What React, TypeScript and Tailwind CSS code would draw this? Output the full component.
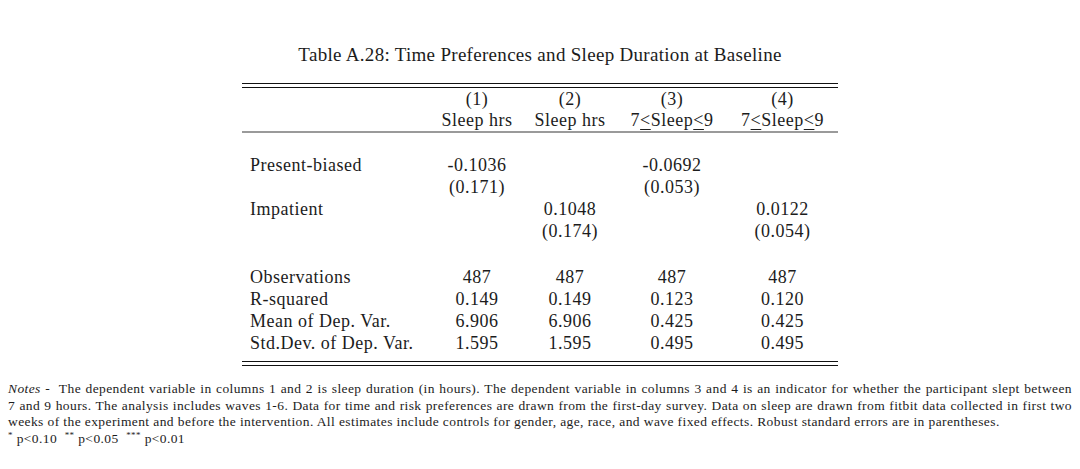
const cols = 'grid grid-cols-[189px_92px_94px_110px_111px]';

const coefRows: [string, string[]][] = [
  ['Present-biased', ['-0.1036', '', '-0.0692', '']],
  ['', ['(0.171)', '', '(0.053)', '']],
  ['Impatient', ['', '0.1048', '', '0.0122']],
  ['', ['', '(0.174)', '', '(0.054)']],
];

const statRows: [string, string[]][] = [
  ['Observations', ['487', '487', '487', '487']],
  ['R-squared', ['0.149', '0.149', '0.123', '0.120']],
  ['Mean of Dep. Var.', ['6.906', '6.906', '0.425', '0.425']],
  ['Std.Dev. of Dep. Var.', ['1.595', '1.595', '0.495', '0.495']],
];

function Row({ label, cells }: { label: string; cells: string[] }) {
  return (
    <div className={`${cols} h-[22px] items-center leading-[22px]`}>
      <div className="pl-[8px] whitespace-nowrap">{label}</div>
      {cells.map((c, i) => (
        <div key={i} className="text-center whitespace-nowrap">{c}</div>
      ))}
    </div>
  );
}

const Leq = () => <span className="underline decoration-1 underline-offset-[3px]">&lt;</span>;

export default function App() {
  return (
    <div className="h-[469px] w-[1080px] overflow-hidden bg-white font-['Liberation_Serif',serif] text-[#1c1c1c]">
      <h1 className="pt-[43px] text-center text-[19px] leading-[24px] tracking-[0.3px]">
        Table A.28: Time Preferences and Sleep Duration at Baseline
      </h1>

      <div className="ml-[242px] mt-[16px] w-[596px] text-[18px] tracking-[0.5px]">
        <div className="border-t border-[#111]" />
        <div className="mt-[3px] border-t border-[#111]" />

        <div className={`${cols} pt-[1px] leading-[21px]`}>
          <div />
          <div className="text-center">(1)</div>
          <div className="text-center">(2)</div>
          <div className="text-center">(3)</div>
          <div className="text-center">(4)</div>
          <div />
          <div className="text-center whitespace-nowrap">Sleep hrs</div>
          <div className="text-center whitespace-nowrap">Sleep hrs</div>
          <div className="text-center whitespace-nowrap">7<Leq />Sleep<Leq />9</div>
          <div className="text-center whitespace-nowrap">7<Leq />Sleep<Leq />9</div>
        </div>
        <div className="h-[2px] bg-[#9a9a9a]" />

        <div className="h-[21px]" />
        {coefRows.map(([l, c], i) => <Row key={i} label={l} cells={c} />)}

        <div className="h-[24px]" />
        {statRows.map(([l, c], i) => <Row key={i} label={l} cells={c} />)}

        <div className="mt-[7px] border-t border-[#111]" />
        <div className="mt-[3px] border-t border-[#111]" />
      </div>

      <div className="mt-[15px] px-[8px] text-[13.5px] leading-[16.5px] tracking-[0.4px]">
        <p className="whitespace-nowrap text-justify [text-align-last:justify]">
          <i>Notes</i> -&nbsp; The dependent variable in columns 1 and 2 is sleep duration (in hours). The dependent variable in columns 3 and 4 is an indicator for whether the participant slept between
        </p>
        <p className="whitespace-nowrap text-justify [text-align-last:justify]">
          7 and 9 hours. The analysis includes waves 1-6. Data for time and risk preferences are drawn from the first-day survey. Data on sleep are drawn from fitbit data collected in first two
        </p>
        <p className="whitespace-nowrap">
          weeks of the experiment and before the intervention. All estimates include controls for gender, age, race, and wave fixed effects. Robust standard errors are in parentheses.
        </p>
        <p className="whitespace-nowrap">
          <sup className="text-[9px]">*</sup> p&lt;0.10&nbsp; <sup className="text-[9px]">**</sup> p&lt;0.05&nbsp; <sup className="text-[9px]">***</sup> p&lt;0.01
        </p>
      </div>
    </div>
  );
}
